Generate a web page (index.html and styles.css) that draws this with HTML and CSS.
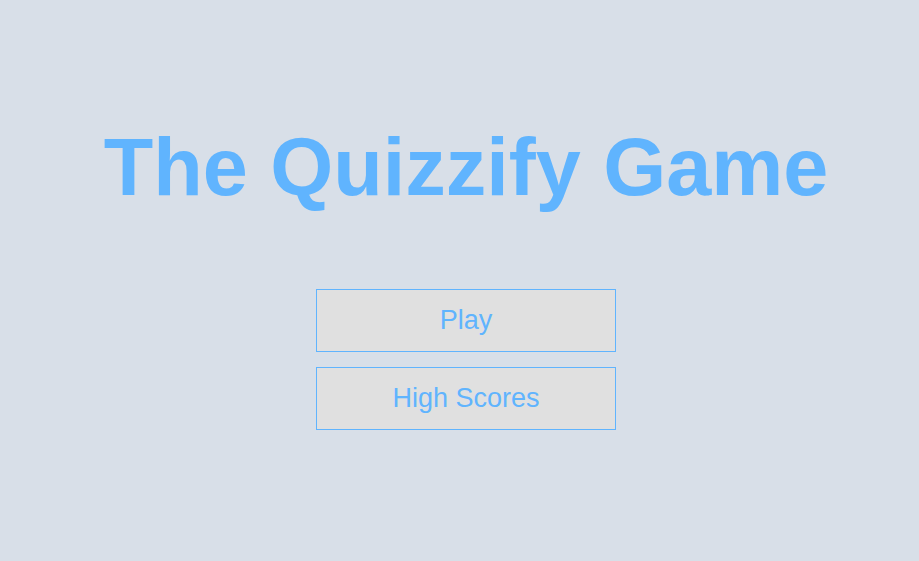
FILE: index.html
```html
<!DOCTYPE html>
<html lang="en">
<head>
    <meta charset="UTF-8">
    <meta name="viewport" content="width=device-width, initial-scale=1.0">
    <title>The Quizzify Game</title>
    <link rel="stylesheet" href="styles.css">
</head>
<body>
    <div class="container">
        <h1>The Quizzify Game</h1>
        <div class="menu">
            <button class="btn">Play</button>
            <button class="btn">High Scores</button>
        </div>
    </div>
</body>
</html>
```

FILE: styles.css
```css
body {
    font-family: Arial, "Liberation Sans", sans-serif;
    background-color: #d8dfe8;
    margin: 0;
    height: 100vh;
}

.container {
    display: flex;
    flex-direction: column;
    align-items: center;
    padding-top: 127px;
    padding-left: 13px;
}

h1 {
    margin: 0;
    font-size: 81px;
    line-height: 80px;
    font-weight: bold;
    color: #60b4fe;
}

.menu {
    display: flex;
    flex-direction: column;
    gap: 15px;
    margin-top: 82px;
}

.btn {
    width: 300px;
    height: 63px;
    background: #e0e0e0;
    border: 1px solid #60b4fe;
    color: #60b4fe;
    font-family: inherit;
    font-size: 27px;
    padding: 0;
    cursor: pointer;
}
```
